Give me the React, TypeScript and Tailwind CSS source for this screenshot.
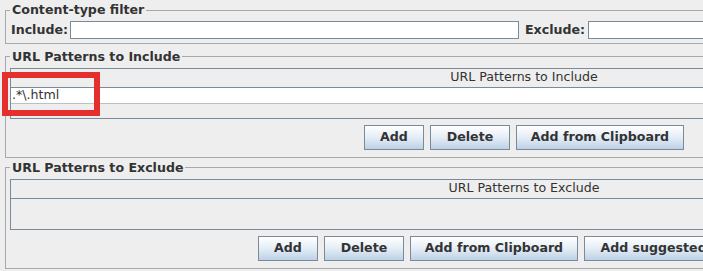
import React from "react";

const font = { fontFamily: '"DejaVu Sans", "Noto Sans", sans-serif' };

function Group({ title, className, children }: { title: string; className?: string; children: React.ReactNode }) {
    return (
        <fieldset className={`border border-[#a8a8a8] mx-[5px] px-[4px] ${className ?? ""}`}>
            <legend className="ml-0 px-[2px] h-[20px] leading-[20px] text-[12.6px] font-bold text-[#333333]">
                {title}
            </legend>
            {children}
        </fieldset>
    );
}

function Btn({ label, w }: { label: string; w: string }) {
    return (
        <div
            className={`${w} h-[25px] flex items-center justify-center border border-[#7a8a99] bg-gradient-to-b from-white via-[#e4edf6] to-[#bdd1e6] text-[12.6px] font-bold text-[#333333] whitespace-nowrap`}
        >
            {label}
        </div>
    );
}

function PatternTable({ header, row }: { header: string; row?: string }) {
    return (
        <div className="mt-[1px] w-[1028px] h-[51px] border border-[#7a8a99] flex flex-col bg-[#eeeeee]">
            <div className="h-[19px] border-b border-[#7a8a99] flex items-center justify-center text-[12.6px] text-[#333333]">
                {header}
            </div>
            {row !== undefined && (
                <div className="h-[16px] bg-white border-b border-[#b8c0c8] flex items-center pl-[1px] text-[12.6px] text-[#333333]">
                    {row}
                </div>
            )}
        </div>
    );
}

export default function App() {
    return (
        <div className="relative w-[703px] h-[271px] overflow-hidden bg-[#eeeeee]" style={font}>
            <div className="w-[1046px] flex flex-col">
                <Group title="Content-type filter" className="pb-[3px]">
                    <div className="mt-[1px] flex items-center text-[12.6px] font-bold text-[#333333]">
                        <span className="w-[60px] pl-[1px]">Include:</span>
                        <div className="w-[449px] h-[18px] bg-white border border-[#7a8a99]" />
                        <span className="w-[69px] pl-[6px]">Exclude:</span>
                        <div className="w-[449px] h-[18px] bg-white border border-[#7a8a99]" />
                    </div>
                </Group>

                <Group title="URL Patterns to Include" className="mt-[3px] pb-[7px]">
                    <PatternTable header="URL Patterns to Include" row=".*\.html" />
                    <div className="mt-[6px] w-[1028px] flex justify-center gap-[6px]">
                        <Btn label="Add" w="w-[60px]" />
                        <Btn label="Delete" w="w-[80px]" />
                        <Btn label="Add from Clipboard" w="w-[168px]" />
                    </div>
                </Group>

                <Group title="URL Patterns to Exclude" className="pb-[7px]">
                    <PatternTable header="URL Patterns to Exclude" />
                    <div className="mt-[6px] w-[1028px] flex justify-center gap-[6px]">
                        <Btn label="Add" w="w-[60px]" />
                        <Btn label="Delete" w="w-[80px]" />
                        <Btn label="Add from Clipboard" w="w-[168px]" />
                        <Btn label="Add suggested Excludes" w="w-[206px]" />
                    </div>
                </Group>
            </div>

            <div className="absolute left-[2px] top-[72px] w-[98px] h-[44px] border-[6px] border-[#e52e2e]" />
        </div>
    );
}
